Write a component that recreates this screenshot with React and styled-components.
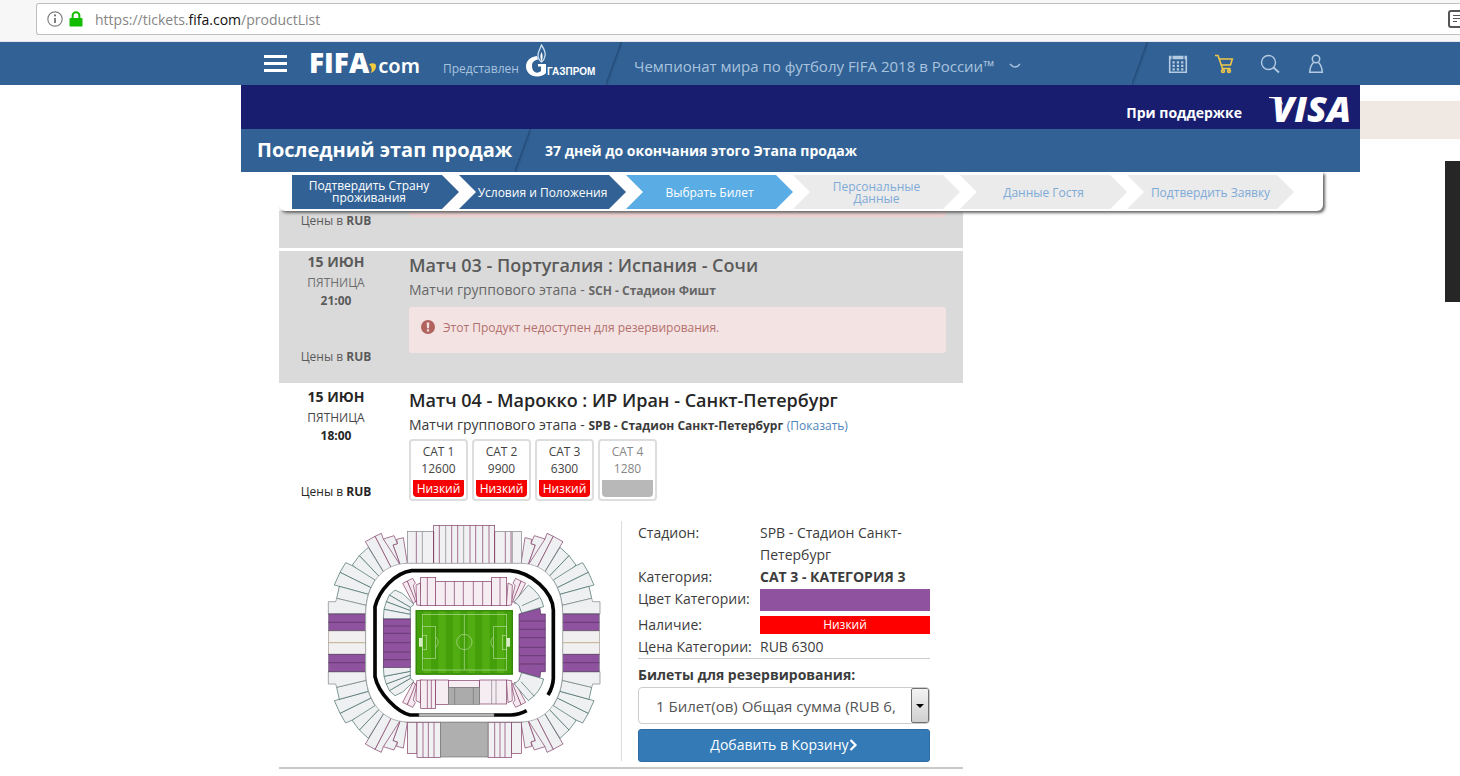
import React,{useState} from 'react'
import styled,{createGlobalStyle,css} from 'styled-components'

const steps = [
    {name:'Подтвердить Страну проживания', state:'done'},
    {name:'Условия и Положения', state:'done'},
    {name:'Выбрать Билет', state:'active'},
    {name:'Персональные Данные', state:'next'},
    {name:'Данные Гостя', state:'next'},
    {name:'Подтвердить Заявку', state:'next'},
]

const categories = [
    {name:'CAT 1', price:12600, level:'Низкий'},
    {name:'CAT 2', price:9900, level:'Низкий'},
    {name:'CAT 3', price:6300, level:'Низкий'},
    {name:'CAT 4', price:1280, level:''},
]

// stadium plan
const wine = '#7d3560'
const teal = '#3c6660'
const grey = '#7b8084'

const outerCorner = [
    ['250,68 262,145 241,151 219,90 232,86 230,73', wine],
    ['190,72 222,62 229,78 232,86 219,90 241,151 215,161', wine],
    ['165,64 184,55 190,72 241,151 215,161', wine],
    ['136,80 165,64 215,161 193,175', wine],
    ['145,97 193,175 180,187 118,122', teal],
    ['118,122 180,187 160,212 97,150', teal],
    ['77,143 97,152 165,195 153,218 60,172', teal],
    ['60,172 153,218 145,238 43,210', teal],
    ['58,214 145,238 138,271 50,250', teal],
    ['47,260 50,250 138,271 137,297 25,297 25,260', grey],
]

const innerMaroon = [
    '248,205 262,198 288,256 280,266',
    '262,198 278,190 286,204 280,212 291,258 288,262',
    '288,210 301,204 306,272 290,270',
]

const innerTeal = [
    '225,225 248,236 282,268 271,277 208,240',
    '208,240 271,277 271,287 199,260',
    '199,260 271,287 271,298 192,283',
    '192,283 271,298 271,312 190,312',
]

const flips = {
    topLeft: 'matrix(1 0 0 1 0 0)',
    topRight: 'matrix(-1 0 0 1 865 0)',
    bottomLeft: 'matrix(1 0 0 -1 0 767)',
    bottomRight: 'matrix(-1 0 0 -1 865 767)',
}

const OuterCorner =({flip})=>(
    <g fill="#eef0f1" strokeWidth="2" transform={flips[flip]}>
        {outerCorner.map(([points,color])=>(
            <polygon key={points} points={points} stroke={color} />
        ))}
    </g>
)

const InnerCorner =({flip,withTeal})=>(
    <g fill="#eef0f1" strokeWidth="2" transform={flips[flip]}>
        {innerMaroon.map((points)=>(
            <polygon key={points} points={points} fill="#f4eaf0" stroke={wine} />
        ))}
        {withTeal && innerTeal.map((points)=>(
            <polygon key={points} points={points} stroke={teal} />
        ))}
    </g>
)

const Lines =({xs,y1,y2,color})=> xs.map((x)=>(
    <line key={x} x1={x} x2={x} y1={y1} y2={y2} stroke={color || wine} strokeWidth="2" />
))

const Rows =({ys,x1,x2,color})=> ys.map((y)=>(
    <line key={y} x1={x1} x2={x2} y1={y} y2={y} stroke={color || '#55305f'} strokeWidth="2" />
))

const SideStand =({x1,x2})=>(
    <g strokeWidth="2">
        <rect x={x1} y="297" width={x2-x1} height="50" fill="#8f529e" stroke={grey} />
        <rect x={x1} y="347" width={x2-x1} height="71" fill="#f1efef" stroke="#a39a90" />
        <rect x={x1} y="418" width={x2-x1} height="52" fill="#8f529e" stroke={grey} />
        <Rows ys={[297,322,347,418,443,470]} x1={x1} x2={x2} />
        <Rows ys={[383]} x1={x1} x2={x2} color="#a8935c" />
    </g>
)

const StadiumMap =()=>{
    return(
        <MapSvg viewBox="0 0 870 750" role="img" aria-label="Стадион Санкт-Петербург">
            <OuterCorner flip="topLeft" />
            <OuterCorner flip="topRight" />
            <OuterCorner flip="bottomLeft" />
            <OuterCorner flip="bottomRight" />
            <SideStand x1={25} x2={137} />
            <SideStand x1={728} x2={838} />

            {/* upper tier */}
            <g fill="#f1f0f2" stroke={grey} strokeWidth="2">
                <rect x="262" y="49" width="79" height="96" />
                <rect x="524" y="49" width="80" height="96" />
                <rect x="341" y="31" width="183" height="114" stroke={wine} />
            </g>
            <Lines xs={[289,341,524,556,573]} y1={50} y2={145} />
            <Lines xs={[307,577]} y1={50} y2={145} color={grey} />
            <Lines xs={[358,395,413,450,467,488,507]} y1={31} y2={145} />
            <Lines xs={[377,431]} y1={31} y2={145} color={grey} />
            <g fill="#f1f0f2" stroke={wine} strokeWidth="2">
                <rect x="262" y="622" width="29" height="93" />
                <rect x="291" y="622" width="70" height="105" />
                <rect x="504" y="622" width="71" height="105" />
                <rect x="575" y="622" width="29" height="93" />
            </g>
            <Lines xs={[309,325,342,524,540,555]} y1={622} y2={727} />
            <rect x="361" y="622" width="143" height="104" fill="#afafaf" stroke="#777" strokeWidth="2" />
            <path d="M262,145 H604 C680,146 727,210 728,297 V470 C727,555 680,620 604,621 H262 C185,620 138,555 137,470 V297 C138,210 185,146 262,145Z" fill="#fff" stroke="#8d9193" strokeWidth="2" />

            {/* roof ring */}
            <path d="M297,600 H270 C232,592 175,535 165,485 V275 C178,225 225,174 275,167 H570 C635,172 698,230 700,285 V490 Q699,516 684,540" fill="none" stroke="#050505" strokeWidth="11" />
            <path d="M522,600 H572 Q598,599 620,587" fill="none" stroke="#050505" strokeWidth="11" />
            <rect x="297" y="595" width="225" height="9" fill="#b4b4b4" stroke="#666" strokeWidth="2" />

            {/* lower tier */}
            <InnerCorner flip="topLeft" withTeal />
            <InnerCorner flip="topRight" />
            <InnerCorner flip="bottomLeft" withTeal />
            <InnerCorner flip="bottomRight" />
            <g fill="#f6edf3" stroke={wine} strokeWidth="2">
                <rect x="347" y="199" width="168" height="73" />
                <rect x="302" y="187" width="45" height="85" />
                <rect x="515" y="187" width="45" height="85" />
                <rect x="302" y="495" width="45" height="85" />
                <rect x="347" y="495" width="38" height="73" />
                <rect x="385" y="497" width="94" height="20" />
                <rect x="479" y="495" width="81" height="72" />
            </g>
            <Lines xs={[376,403,430,460,488]} y1={199} y2={272} />
            <Lines xs={[322,540]} y1={187} y2={272} />
            <Lines xs={[322,334]} y1={495} y2={580} />
            <Lines xs={[515,528]} y1={495} y2={567} color={grey} />
            <rect x="385" y="517" width="94" height="51" fill="#ababab" stroke="#777" strokeWidth="2" />
            <Lines xs={[404,460]} y1={517} y2={568} color="#777" />
            <g stroke="#55305f" strokeWidth="2" fill="#8f529e">
                <rect x="190" y="312" width="81" height="145" />
                <path d="M597,297 L660,280 L662,297 H676 V470 H662 L660,487 L597,470Z" />
            </g>
            <Rows ys={[333,355,383,411,434]} x1={190} x2={271} />
            <Rows ys={[318,343,368,397,422,447]} x1={597} x2={676} />
            <g fill="#eef0f1" stroke={teal} strokeWidth="2">
                <path d="M583,260 L625,210 Q662,236 671,275 L605,294 L597,272Z" />
                <path d="M606,272 L657,249" />
                <path d="M583,507 L625,557 Q662,531 671,492 L605,473 L597,495Z" />
                <path d="M603,500 L642,543" />
            </g>

            {/* pitch */}
            <rect x="287" y="285" width="292" height="194" fill="#43a00b" />
            {[0,1,2,3,4,5].map((i)=>(
                <rect key={i} x={311 + i*44} y="285" width="22" height="194" fill="#52ad12" />
            ))}
            <rect x="289" y="287" width="288" height="190" fill="none" stroke="#35880a" strokeWidth="4" />
            <g fill="none" stroke="#b4dc97" strokeWidth="2">
                <rect x="307" y="298" width="253" height="167" />
                <path d="M433,298 V465" />
                <circle cx="433" cy="381" r="23" />
                <rect x="307" y="335" width="40" height="95" />
                <rect x="307" y="361" width="13" height="43" />
                <path d="M347,366 Q362,381 347,398" />
                <rect x="520" y="335" width="40" height="95" />
                <rect x="547" y="361" width="13" height="43" />
                <path d="M520,366 Q505,381 520,398" />
            </g>
            <rect x="297" y="369" width="10" height="26" fill="#d8ecc8" />
            <rect x="560" y="369" width="10" height="26" fill="#d8ecc8" />
        </MapSvg>
    )
}

const AlertIcon =()=>(
    <svg width="14" height="14" viewBox="0 0 14 14" aria-hidden="true">
        <circle cx="7" cy="7" r="7" fill="#b2625f" />
        <path d="M5.7,2.4 H8.3 L8,8.2 H6Z" fill="#f4e3e3" />
        <rect x="5.9" y="9.3" width="2.2" height="2.2" fill="#f4e3e3" />
    </svg>
)

const MatchDate =({time})=>(
    <DateCol>
        <h4>15 ИЮН</h4>
        <p>ПЯТНИЦА</p>
        <time>{time}</time>
        <Currency>Цены в <b>RUB</b></Currency>
    </DateCol>
)

const App =()=>{
    const [selected,setSelected] = useState('CAT 3')
    const [amount,setAmount] = useState('1')
    return(
        <>
        <GlobalStyle />
        <BrowserBar>
            <AddressBox>
                <svg width="16" height="16" viewBox="0 0 16 16" aria-hidden="true">
                    <circle cx="8" cy="8" r="7.2" fill="none" stroke="#808080" strokeWidth="1.2" />
                    <path d="M8,7 V12" stroke="#707070" strokeWidth="1.8" />
                    <circle cx="8" cy="4.4" r="1.1" fill="#707070" />
                </svg>
                <svg width="14" height="16" viewBox="0 0 14 16" aria-hidden="true">
                    <path d="M3.6,8 V4.6 a3.4,3.4 0 0 1 6.8,0 V8" fill="none" stroke="#12bc00" strokeWidth="2" />
                    <rect x="0.5" y="7" width="13" height="8.5" rx="1" fill="#12bc00" />
                </svg>
                <Address>https://tickets.<b>fifa.com</b>/productList</Address>
                <svg width="12" height="18" viewBox="0 0 12 18" aria-hidden="true">
                    <rect x="1" y="1" width="17" height="16" rx="2" fill="none" stroke="#555" strokeWidth="2" />
                    <path d="M5,5.5 H12 M5,8.5 H12 M5,11.5 H9" stroke="#555" strokeWidth="1" />
                </svg>
            </AddressBox>
        </BrowserBar>
        <Nav>
            <Burger aria-label="Меню"><span /><span /><span /></Burger>
            <FifaLogo href="#fifa">
                FIFA
                <svg width="8" height="10" viewBox="0 0 8 10" aria-hidden="true"><path d="M0,1 Q7,-1 7,3 Q7,8 2,10 Q4,5 0,1Z" fill="#f2cb3a" /></svg>
                <span>com</span>
            </FifaLogo>
            <Presented>Представлен</Presented>
            <Gazprom>
                <svg width="21" height="34" viewBox="0 0 21 34" aria-hidden="true">
                    <path d="M15.5,1 C18,5 20,8 19,12 C18.5,15 17,17 15.5,18 C13.5,16.5 12,14 12,11 C12,7 14.5,4.5 15.5,1Z" fill="none" stroke="#cfe2f2" strokeWidth="1.3" />
                    <path d="M15.5,8 C17,11 17,14 15.5,17.5 C14,14 14,11 15.5,8Z" fill="#fff" />
                    <path d="M11,12 C4,13 0,17 0,22.5 C0,28.5 5,32.5 11,32.5 C15,32.5 18,31 20,29 V20 H12 V22.5 H15 V27 C10,31 6,27 6,22 C6,18 8.5,16 12,15.5Z" fill="#fff" />
                </svg>
                <span>ГАЗПРОМ</span>
            </Gazprom>
            <Slash />
            <TournamentLink href="#tournament">
                Чемпионат мира по футболу FIFA 2018 в России™
                <svg width="12" height="6" viewBox="0 0 12 6" aria-hidden="true"><path d="M1,1 Q6,7 11,1" fill="none" stroke="currentColor" strokeWidth="1.4" /></svg>
            </TournamentLink>
            <Slash $push />
            <NavIcons>
                <IconButton aria-label="Календарь">
                    <svg width="20" height="20" viewBox="0 0 20 20" fill="none" stroke="currentColor">
                        <path d="M1.7,2 V18.3 H18.3 V2" strokeWidth="1.6" />
                        <path d="M1,3.5 H19" strokeWidth="3.5" strokeDasharray="2.5 1 11 1 3" />
                        <path d="M4.5,8.3 H16 M4.5,11.8 H16 M4.5,15.3 H16" strokeWidth="2.3" strokeDasharray="2.3 2" />
                    </svg>
                </IconButton>
                <IconButton aria-label="Корзина" $gold>
                    <svg width="20" height="20" viewBox="0 0 20 20" fill="none" stroke="currentColor" strokeWidth="1.6">
                        <path d="M1,1.5 H4 L8.5,14.5 H16.5 M5.2,5 H18.3 L16.5,11 H7.3" />
                        <circle cx="9" cy="17" r="1.4" />
                        <circle cx="15" cy="17" r="1.4" />
                    </svg>
                </IconButton>
                <IconButton aria-label="Поиск">
                    <svg width="20" height="20" viewBox="0 0 20 20" fill="none" stroke="currentColor" strokeWidth="1.4">
                        <circle cx="8.5" cy="8.5" r="7" />
                        <path d="M13.5,13.5 L19,18.5" strokeWidth="1.8" />
                    </svg>
                </IconButton>
                <IconButton aria-label="Профиль">
                    <svg width="20" height="20" viewBox="0 0 20 20" fill="none" stroke="currentColor" strokeWidth="1.5">
                        <circle cx="10" cy="5" r="3.7" />
                        <path d="M7.5,8.5 Q4,12 3.7,18.3 H16.3 Q16,12 12.5,8.5" />
                    </svg>
                </IconButton>
            </NavIcons>
        </Nav>
        <Page>
            <Site>
                <SponsorBar>
                    <span>При поддержке</span>
                    <Visa>
                        <svg width="14" height="8" viewBox="0 0 14 8" aria-hidden="true"><path d="M0,0 H8 Q12,0 14,8 Q9,1 0,1Z" fill="#fff" /></svg>
                        VISA
                    </Visa>
                </SponsorBar>
                <PhaseBar>
                    <h1>Последний этап продаж</h1>
                    <Slash />
                    <p>37 дней до окончания этого Этапа продаж</p>
                </PhaseBar>
                <Steps>
                    {steps.map((item,idx)=>(
                        <Step key={item.name} $state={item.state} $first={idx===0}>
                            <span>{item.name}</span>
                        </Step>
                    ))}
                </Steps>
                <Products>
                    <RowTail>
                        <Currency>Цены в <b>RUB</b></Currency>
                        <AlertTail />
                    </RowTail>
                    <Product $off>
                        <MatchDate time="21:00" />
                        <Info>
                            <h2>Матч 03 - Португалия : Испания - Сочи</h2>
                            <Stage>Матчи группового этапа - <b>SCH - Стадион Фишт</b></Stage>
                            <AlertBox role="alert">
                                <AlertIcon />
                                <span>Этот Продукт недоступен для резервирования.</span>
                            </AlertBox>
                        </Info>
                    </Product>
                    <Product>
                        <MatchDate time="18:00" />
                        <Info>
                            <h2>Матч 04 - Марокко : ИР Иран - Санкт-Петербург</h2>
                            <Stage>
                                Матчи группового этапа - <b>SPB - Стадион Санкт-Петербург</b> <a href="#map">(Показать)</a>
                            </Stage>
                            <Categories>
                                {categories.map((item)=>(
                                    <Category key={item.name} disabled={!item.level} aria-pressed={selected===item.name} onClick={()=>setSelected(item.name)}>
                                        <span>{item.name}</span>
                                        <span>{item.price}</span>
                                        <Level $empty={!item.level}>{item.level}</Level>
                                    </Category>
                                ))}
                            </Categories>
                        </Info>
                    </Product>
                    <Details>
                        <MapBox><StadiumMap /></MapBox>
                        <Order>
                            <Facts>
                                <dt>Стадион:</dt>
                                <dd>SPB - Стадион Санкт-Петербург</dd>
                                <dt>Категория:</dt>
                                <dd><b>CAT 3 - КАТЕГОРИЯ 3</b></dd>
                                <dt>Цвет Категории:</dt>
                                <dd><Swatch /></dd>
                                <dt>Наличие:</dt>
                                <dd><Stock>Низкий</Stock></dd>
                                <dt>Цена Категории:</dt>
                                <dd>RUB 6300</dd>
                            </Facts>
                            <label htmlFor="amount">Билеты для резервирования:</label>
                            <SelectBox>
                                <select id="amount" value={amount} onChange={(e)=>setAmount(e.target.value)}>
                                    <option value="1">1 Билет(ов) Общая сумма (RUB 6,300.00)</option>
                                    <option value="2">2 Билет(ов) Общая сумма (RUB 12,600.00)</option>
                                </select>
                                <Arrow><svg width="8" height="4" viewBox="0 0 8 4" aria-hidden="true"><path d="M0,0 H8 L4,4Z" /></svg></Arrow>
                            </SelectBox>
                            <AddButton>
                                Добавить в Корзину
                                <svg width="9" height="12" viewBox="0 0 9 12" aria-hidden="true"><path d="M1.5,1 L6.5,6 L1.5,11" fill="none" stroke="#fff" strokeWidth="2.2" /></svg>
                            </AddButton>
                        </Order>
                    </Details>
                </Products>
            </Site>
            <Aside>
                <Strip />
                <DarkBlock />
            </Aside>
        </Page>
        </>
    )
}
export default App;

const GlobalStyle = createGlobalStyle`
*{
    box-sizing: border-box;
    margin: 0;
    padding: 0;
}
body{
    background: #fff;
    color: #3c3c3c;
    font-family: "Open Sans", "Noto Sans", sans-serif;
    font-size: 14px;
}
button, select{
    font-family: inherit;
    cursor: pointer;
}
svg{
    flex: none;
    display: block;
}
a{
    text-decoration: none;
}
`

const BrowserBar = styled.div`
    height: 42px;
    padding: 3px 0 7px 36px;
    background: #f7f7f7;
    border-bottom: 1px solid #e3e6ea;
`
const AddressBox = styled.div`
    display: flex;
    align-items: center;
    gap: 6px;
    height: 32px;
    padding-left: 10px;
    background: #fff;
    border: 1px solid #c0c0c0;
    border-right: 0;
    border-radius: 3px 0 0 3px;
    overflow: hidden;
`
const Address = styled.span`
    flex: 1;
    padding-left: 6px;
    font-size: 14px;
    color: #858585;
    b{
        font-weight: 400;
        color: #111;
    }
`

const Nav = styled.nav`
    display: flex;
    align-items: center;
    height: 43px;
    padding: 0 134px 0 264px;
    background: #326295;
    color: #a9c3de;
`
const Burger = styled.button`
    display: flex;
    flex-direction: column;
    gap: 4px;
    width: 23px;
    border: 0;
    background: none;
    span{
        height: 3px;
        background: #fff;
    }
`
const FifaLogo = styled.a`
    display: flex;
    align-items: baseline;
    width: 110px;
    margin-left: 22px;
    padding-top: 1px;
    color: #fff;
    font-size: 28px;
    font-weight: 800;
    line-height: 42px;
    span{
        margin-left: 1px;
        font-family: "Noto Sans", sans-serif;
        font-size: 20px;
        font-weight: 600;
    }
`
const Presented = styled.span`
    width: 73px;
    margin-left: 24px;
    padding-top: 11px;
    font-size: 12px;
    line-height: 16px;
`
const Gazprom = styled.div`
    display: flex;
    align-items: flex-end;
    width: 67px;
    margin: 0 13px 5px 10px;
    color: #fff;
    span{
        font: bold 10px/12px "Liberation Sans", sans-serif;
    }
`
const Slash = styled.i`
    flex: none;
    width: 16px;
    height: 43px;
    background: linear-gradient(110deg, transparent 44%, #234a78 49%, #2b598a 52%, transparent 60%);
    margin-left: ${(p)=>p.$push ? 'auto' : '0'};
`
const TournamentLink = styled.a`
    display: flex;
    align-items: center;
    gap: 14px;
    margin-left: 12px;
    padding-top: 4px;
    color: #a9c3de;
    font-size: 15px;
    white-space: nowrap;
`
const NavIcons = styled.div`
    display: flex;
    gap: 26px;
    margin-left: 20px;
`
const IconButton = styled.button`
    width: 20px;
    height: 20px;
    border: 0;
    background: none;
    color: ${(p)=>p.$gold ? '#f0c64a' : '#b4cae2'};
`

const Page = styled.div`
    display: grid;
    grid-template-columns: minmax(0, 1fr) 100px;
    padding-left: 241px;
`
const Site = styled.main`
    min-width: 0;
`
const SponsorBar = styled.div`
    display: flex;
    align-items: center;
    justify-content: flex-end;
    gap: 30px;
    height: 44px;
    padding-right: 9px;
    background: #191d70;
    color: #fff;
    font-size: 14px;
    font-weight: 700;
    span{
        padding-top: 10px;
    }
`
const Visa = styled.strong`
    position: relative;
    padding-top: 3px;
    font-size: 36px;
    font-style: italic;
    line-height: 40px;
    svg{
        position: absolute;
        left: -3px;
        top: 11px;
    }
`
const PhaseBar = styled.div`
    display: flex;
    align-items: center;
    height: 43px;
    padding-left: 16px;
    background: #326295;
    color: #fff;
    h1{
        width: 258px;
        font-size: 20px;
        font-weight: 700;
        line-height: 26px;
        padding-bottom: 2px;
        white-space: nowrap;
    }
    p{
        margin-left: 14px;
        font-size: 14px;
        font-weight: 700;
    }
`
const Steps = styled.ol`
    position: relative;
    z-index: 1;
    display: flex;
    height: 39px;
    margin: 0 37px 0 38px;
    padding: 3px 0 2px 13px;
    background: #fff;
    border-radius: 0 0 6px 6px;
    box-shadow: 2px 2px 3px #666;
    clip-path: inset(0 -8px -8px 0);
    list-style: none;
`
const stepColors = {
    done: css`background: #326295; color: #fff;`,
    active: css`background: #5aace4; color: #fff;`,
    next: css`background: #ebebeb; color: #7eaad8;`,
}
const Step = styled.li`
    display: flex;
    align-items: center;
    justify-content: center;
    width: 167px;
    padding: ${(p)=>p.$first ? '0 26px 0 13px' : '2px 17px 0'};
    font-size: 12px;
    line-height: 12px;
    text-align: center;
    ${(p)=>stepColors[p.$state]}
    clip-path: polygon(0 0, calc(100% - 17px) 0, 100% 50%, calc(100% - 17px) 100%, 0 100%, ${(p)=>p.$first ? '0' : '17px'} 50%);
`

const Products = styled.section`
    max-width: 684px;
    margin-left: 38px;
    border-bottom: 2px solid #c9c9c9;
`
/* end of the previous row, the steps cover the rest of it */
const RowTail = styled.div`
    display: grid;
    grid-template-columns: 114px 1fr;
    column-gap: 16px;
    height: 37px;
    margin-bottom: 3px;
    padding-right: 17px;
    background: #dadada;
    color: #5a5a5a;
    text-align: center;
`
const AlertTail = styled.div`
    height: 6px;
    background: #f0d2d2;
    border-radius: 0 0 3px 3px;
`
const Product = styled.article`
    display: flex;
    height: 132px;
    margin-bottom: 3px;
    background: ${(p)=>p.$off ? '#dadada' : '#fff'};
    color: ${(p)=>p.$off ? '#5a5a5a' : '#262626'};
`
const DateCol = styled.div`
    display: flex;
    flex-direction: column;
    width: 114px;
    text-align: center;
    h4{
        font-size: 14px;
        line-height: 22px;
    }
    p{
        font-size: 12px;
        line-height: 20px;
        opacity: .85;
    }
    time{
        margin-bottom: 38px;
        font-size: 12px;
        font-weight: 700;
        line-height: 16px;
    }
`
const Currency = styled.span`
    font-size: 12px;
    line-height: 20px;
`
const Info = styled.div`
    flex: 1;
    padding: 1px 17px 0 16px;
    h2{
        font-size: 18px;
        font-weight: 600;
        line-height: 26px;
        white-space: nowrap;
    }
`
const Stage = styled.p`
    font-size: 14px;
    line-height: 24px;
    opacity: .9;
    b, a{
        font-size: 12px;
    }
    a{
        color: #3a77b4;
    }
`
const AlertBox = styled.div`
    display: flex;
    align-items: center;
    gap: 8px;
    height: 46px;
    margin-top: 4px;
    padding: 0 12px 6px;
    background: #f4e3e3;
    border-radius: 3px;
    color: #b2706d;
    font-size: 12px;
`
const Categories = styled.div`
    display: flex;
    gap: 4px;
    margin-top: 1px;
`
const Category = styled.button`
    display: flex;
    flex-direction: column;
    width: 59px;
    height: 62px;
    padding: 2px;
    background: #fff;
    border: 2px solid #ddd;
    border-radius: 4px;
    color: #444;
    font-size: 12px;
    line-height: 17px;
    &:disabled{
        color: #888;
    }
`
const Level = styled.em`
    height: 17px;
    margin-top: 3px;
    background: ${(p)=>p.$empty ? '#b8b8b8' : '#f60000'};
    border-radius: 0 0 4px 4px;
    color: #fff;
    font-style: normal;
`
const Details = styled.div`
    display: flex;
    height: 246px;
`
const MapBox = styled.div`
    width: 343px;
    height: 240px;
    border-right: 1px solid #ddd;
`
const MapSvg = styled.svg`
    width: 290px;
    height: 250px;
    margin: -6px 0 0 41px;
`
const Order = styled.div`
    flex: none;
    width: 292px;
    margin-left: 16px;
    label{
        display: block;
        font-weight: 700;
        line-height: 20px;
        margin: 6px 0 2px;
    }
`
const Facts = styled.dl`
    display: grid;
    grid-template-columns: 122px 1fr;
    padding-top: 1px;
    border-bottom: 1px solid #ccc;
    line-height: 22px;
    dt{
        white-space: nowrap;
    }
`
const Swatch = styled.div`
    height: 22px;
    margin: 1px 0 3px;
    background: #8f529e;
`
const Stock = styled.div`
    height: 18px;
    margin: 2px 0;
    background: #fe0000;
    color: #fff;
    font-size: 12px;
    line-height: 18px;
    text-align: center;
`
const SelectBox = styled.div`
    display: flex;
    height: 37px;
    border: 1px solid #ccc;
    border-radius: 4px;
    overflow: hidden;
    select{
        flex: 1;
        min-width: 0;
        margin-right: 16px;
        padding-left: 17px;
        border: 0;
        background: none;
        color: #555;
        font-size: 15px;
        appearance: none;
    }
`
const Arrow = styled.span`
    display: flex;
    align-items: center;
    justify-content: center;
    width: 18px;
    background: linear-gradient(#f3f3f3, #cfcfcf);
    border: 1px solid #707070;
    border-radius: 2px;
    pointer-events: none;
`
const AddButton = styled.button`
    display: flex;
    align-items: center;
    justify-content: center;
    width: 100%;
    height: 33px;
    margin-top: 5px;
    padding-bottom: 2px;
    background: #337ab7;
    border: 1px solid #2e6da4;
    border-radius: 3px;
    color: #fff;
    font-size: 14px;
`

const Aside = styled.aside`
    display: flex;
    flex-direction: column;
    align-items: flex-end;
    gap: 22px;
    padding-top: 16px;
`
const Strip = styled.div`
    width: 100%;
    height: 38px;
    background: #f0e9e3;
`
const DarkBlock = styled.div`
    width: 15px;
    height: 141px;
    background: #262626;
`
